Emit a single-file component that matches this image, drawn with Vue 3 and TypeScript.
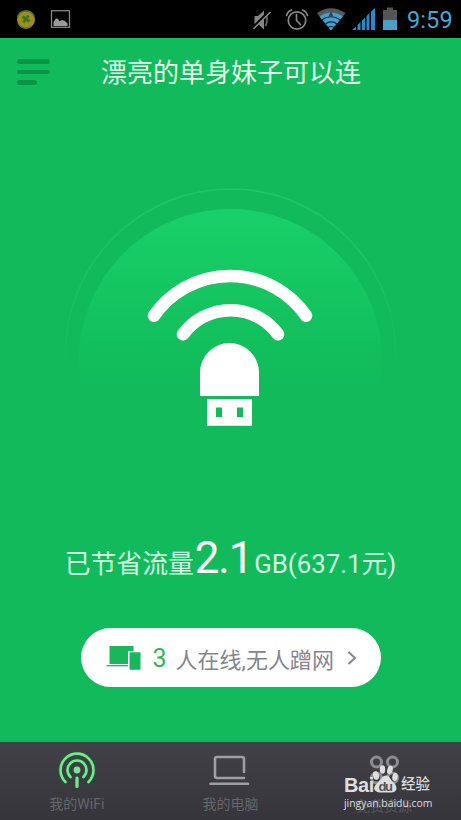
<script setup lang="ts">
interface Tab {
  id: string
  label: string
}

const tabs: Tab[] = [
  { id: 'wifi', label: '我的WiFi' },
  { id: 'computer', label: '我的电脑' },
  { id: 'resources', label: '免费资源' },
]
const online = 3
const clock = '9:59'
</script>

<template>
  <div class="screen">
    <header class="status">
      <svg class="status-left" width="80" height="38" viewBox="0 0 80 38">
        <circle cx="26" cy="19.5" r="9" fill="#a18d1f" />
        <path d="M17.5 17a9 9 0 0 1 16.5-1M18 23a9 9 0 0 0 14 3" fill="none" stroke="#4d762d" stroke-width="1.6" />
        <path d="M22.500 16.500l7 5M28.500 15.500l-5 7" stroke="#3d7722" stroke-width="3" />
        <rect x="51.5" y="10.7" width="18" height="16.6" fill="#050505" stroke="#8d8d8d" stroke-width="1.2" />
        <path d="M53.5 26v-4l2.5-3.5 2 .2 1.5 2.5 2.5-1.2 3 1 2.500 2.500v2.500z" fill="#9a9a9a" />
      </svg>
      <svg class="status-right" width="150" height="38" viewBox="250 0 150 38">
        <path d="M254.500 16h3.500l6-5.500v19l-6-5.500h-3.500z" fill="#858585" />
        <path d="M265.500 14q3 5.500 0 12" fill="none" stroke="#666" stroke-width="1.800" />
        <path d="M252.500 28L269.500 11" stroke="#050505" stroke-width="2.500" />
        <path d="M253.500 29L270.500 12" stroke="#858585" stroke-width="1.600" />
        <g fill="none" stroke="#888" stroke-width="1.700" stroke-linecap="round">
          <circle cx="297" cy="20.500" r="8.700" />
          <path d="M296.500 14.500v6l4 4M286.500 15.500q1.500-4.500 5-5.500M307.500 15.500q-1.500-4.500-5-5.500" />
        </g>
        <path d="M317 13q14-9.500 28.500 0l-3.500 4.500q-11-7-21.500 0z" fill="#55585a" />
        <path d="M319.500 16.500q11.500-8 23.500 0L331 30.500z" fill="#4a9fc8" />
        <path d="M321.500 20q9.500-6.500 19 0M325 24.200q6-4.500 12.500 0M328 27.500q3-2 6.500 0" fill="none" stroke="#092e42" stroke-width="1.200" />
        <path d="M331 11l2.500 5.500h-5z" fill="#34464f" />
        <path d="M352 30l4-3.500V30zM357.500 30v-5l3-3v8zM362 30v-9.500l3-3V30zM366.500 30V16l3-3v17zM371 30V11.500l4-3.500v22z" fill="#2888ce" />
        <path d="M383 10h4V7.500h6V10h4v11h-14z" fill="#555" />
        <rect x="383" y="20" width="14" height="10" fill="#499fc6" />
      </svg>
      <time class="clock">{{ clock }}</time>
    </header>

    <main class="main">
      <div class="title-bar">
        <button class="menu" aria-label="菜单">
          <i></i><i></i><i class="short"></i>
        </button>
        <h1>漂亮的单身妹子可以连</h1>
      </div>

      <svg class="hero" width="361" height="260" viewBox="50 180 361 260">
        <defs>
          <linearGradient id="dome" gradientUnits="userSpaceOnUse" x1="0" y1="209" x2="0" y2="388">
            <stop offset="0" stop-color="#18d069" />
            <stop offset=".5" stop-color="#14c560" />
            <stop offset=".85" stop-color="#12bd5c" />
            <stop offset="1" stop-color="#11bb5b" />
          </linearGradient>
          <linearGradient id="ring" gradientUnits="userSpaceOnUse" x1="0" y1="188" x2="0" y2="375">
            <stop offset="0" stop-color="#1dc666" />
            <stop offset="1" stop-color="#11bb5b" />
          </linearGradient>
        </defs>
        <circle cx="230.500" cy="354" r="165" fill="none" stroke="url(#ring)" stroke-width="1.700" />
        <path d="M81.500 388a151.500 151.500 0 1 1 298 0z" fill="url(#dome)" />
        <g fill="none" stroke="#fff" stroke-width="12.600" stroke-linecap="round">
          <path d="M154 315.700a92.500 92.500 0 0 1 152 0" />
          <path d="M183 334.200a59 59 0 0 1 95 0" />
        </g>
        <path d="M200 396v-23.500a29.500 29.500 0 0 1 59 0V396z" fill="#fff" />
        <path d="M207 399.300h45v26.400h-45zM216 407.500v9.500h6v-9.500zM237 407.500v9.500h6v-9.500z" fill="#fff" fill-rule="evenodd" />
      </svg>

      <p class="saved">已节省流量<strong>2.1</strong><span>GB(637.1</span>元)</p>

      <button class="pill">
        <svg width="36" height="26" viewBox="0 0 36 26">
          <path d="M3.500 1h24v5h-5.500v13H3.500z" fill="#18b75b" />
          <path d="M.5 20.700H22" stroke="#18b75b" stroke-width="1.300" />
          <rect x="23.500" y="7.300" width="11" height="17.500" rx="1" fill="#18b75b" />
        </svg>
        <b>{{ online }}</b>
        <span>人在线,无人蹭网</span>
        <svg class="chevron" width="10" height="16" viewBox="0 0 10 16">
          <path d="M1.500 2L8 8l-6.500 6" fill="none" stroke="#85858f" stroke-width="2" />
        </svg>
      </button>
    </main>

    <nav class="tabs">
      <a v-for="tab in tabs" :key="tab.id" class="tab" :class="tab.id">
        <svg v-if="tab.id === 'wifi'" width="42" height="40" viewBox="56 750 42 40">
          <g fill="none" stroke="#225635" stroke-width="5" stroke-linecap="round">
            <path d="M65.500 782a16.500 16.500 0 1 1 23 0M70.500 777a9.500 9.500 0 1 1 13 0M77 778v8.500" />
          </g>
          <g fill="none" stroke="#7be591" stroke-width="2.600" stroke-linecap="round">
            <path d="M65.500 782a16.500 16.500 0 1 1 23 0M70.500 777a9.500 9.500 0 1 1 13 0" />
            <path d="M77 778v8.500" stroke-width="3.200" />
          </g>
          <circle cx="77" cy="770" r="3.400" fill="#7be591" />
        </svg>
        <svg v-else-if="tab.id === 'computer'" width="42" height="40" viewBox="209 750 42 40">
          <path d="M244 772v-13q0-2-2-2h-25q-2 0-2 2v17q0 2 2 2h27M210.500 783.700H248" fill="none" stroke="#9f9da5" stroke-width="2.600" stroke-linecap="round" stroke-linejoin="round" />
        </svg>
        <svg v-else width="42" height="40" viewBox="363 750 42 40">
          <g fill="none" stroke="#8d8c92" stroke-width="3">
            <circle cx="376.500" cy="762" r="5" />
            <circle cx="392.500" cy="762" r="5" />
            <circle cx="376.500" cy="778" r="5" />
            <circle cx="392.500" cy="778" r="5" />
          </g>
        </svg>
        <span>{{ tab.label }}</span>
      </a>
      <div class="watermark">
        <div class="brand">
          <span class="bai">Bai</span>
          <svg width="26" height="32" viewBox="373 765 26 32">
            <g fill="#dededf">
              <ellipse cx="377" cy="777.500" rx="3" ry="4.300" transform="rotate(-15 377 777.500)" />
              <ellipse cx="383.500" cy="771.500" rx="2.700" ry="4.200" />
              <ellipse cx="391" cy="772" rx="2.700" ry="4.200" transform="rotate(18 391 772)" />
              <ellipse cx="396" cy="779" rx="2.700" ry="4" transform="rotate(12 396 779)" />
              <path d="M387 777.500c4 0 4 4 7.500 7 6 6 2 10.500-3.500 10h-8c-7 .5-11-4-4.500-9.500 3.500-3 4.500-7.500 8.500-7.500z" />
            </g>
            <text x="379.500" y="792.500" font-size="13" font-weight="700" font-family="Liberation Sans, sans-serif" fill="#55545a" textLength="14.500">du</text>
          </svg>
          <span class="exp">经验</span>
        </div>
        <div class="url">jingyan.baidu.com</div>
      </div>
    </nav>
  </div>
</template>

<style>
body {
  margin: 0;
  background: #11bb5b;
}
</style>

<style scoped>
.screen {
  width: 461px;
  height: 820px;
  display: flex;
  flex-direction: column;
  overflow: hidden;
  background: #11bb5b;
  font-family: Roboto, "Noto Sans CJK SC", sans-serif;
}
svg {
  display: block;
  flex: none;
}
button {
  border: 0;
  margin: 0;
  padding: 0;
  font: inherit;
}
.status {
  height: 38px;
  flex: none;
  display: flex;
  align-items: center;
  background: #000;
}
.status-right {
  margin-left: 170px;
}
.clock {
  margin-left: 7px;
  padding-top: 3px;
  color: #45a9d7;
  font-size: 23.500px;
  line-height: 35px;
  letter-spacing: 0.1px;
}
.main {
  flex: 1;
  display: flex;
  flex-direction: column;
  align-items: center;
}
.title-bar {
  width: 461px;
  height: 68px;
  display: flex;
  align-items: center;
}
.menu {
  width: 33px;
  margin-left: 17px;
  display: flex;
  flex-direction: column;
  gap: 5.500px;
  background: none;
}
.menu i {
  width: 33px;
  height: 4.700px;
  border-radius: 2.500px;
  background: #0a9447;
}
.menu .short {
  width: 20px;
}
h1 {
  margin: 2px 0 0 51px;
  color: #e2fbec;
  font-size: 26px;
  font-weight: 400;
  line-height: 38px;
}
.hero {
  margin-top: 74px;
}
.saved {
  margin: 86px 0 0;
  height: 64px;
  line-height: 64px;
  white-space: nowrap;
  color: #d3fbe1;
  font-size: 25.800px;
}
.saved strong {
  margin: 0 2px 0 1px;
  color: #fff;
  font-size: 44px;
  font-weight: 400;
  letter-spacing: -1.200px;
}
.pill {
  width: 300px;
  height: 59px;
  margin-top: 38px;
  padding-left: 25px;
  box-sizing: border-box;
  display: flex;
  align-items: center;
  border-radius: 30px;
  background: #fff;
  color: #85858f;
}
.pill b {
  margin: 2px 0 0 11px;
  color: #35b362;
  font-size: 25px;
  font-weight: 400;
}
.pill span {
  margin-left: 9px;
  font-size: 22px;
}
.chevron {
  margin-left: 13px;
}
.tabs {
  position: relative;
  height: 78px;
  flex: none;
  display: grid;
  grid-template-columns: repeat(3, 1fr);
  background: linear-gradient(#424147, #36353b);
}
.tab {
  display: flex;
  flex-direction: column;
  align-items: center;
  padding-top: 8px;
  color: #66656b;
  font-size: 14px;
  line-height: 20px;
}
.tab span {
  margin-top: 4px;
}
.tab.resources span {
  margin-top: 6px;
  color: #57565c;
}
.watermark {
  position: absolute;
  left: 344px;
  top: 21px;
  width: 92px;
  color: #dededf;
}
.brand {
  display: flex;
  height: 32px;
  align-items: flex-end;
}
.bai {
  width: 28px;
  font: 700 20px/20px "Liberation Sans", sans-serif;
  letter-spacing: -0.4px;
}
.exp {
  margin-left: 3px;
  font-size: 14.500px;
  font-weight: 500;
  line-height: 20px;
  white-space: nowrap;
}
.url {
  font: 10.400px/16px "Open Sans", sans-serif;
  white-space: nowrap;
}
</style>
